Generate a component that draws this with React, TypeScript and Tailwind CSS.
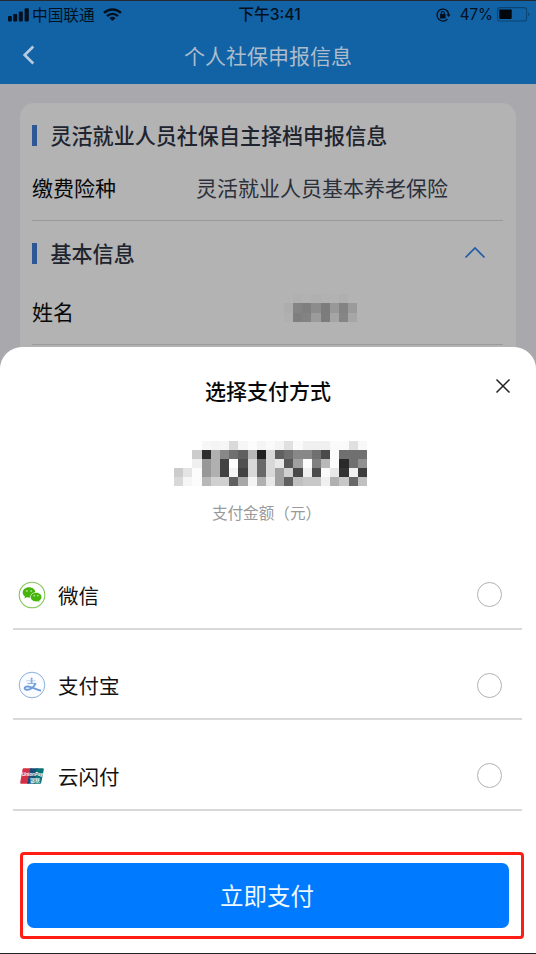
import React from "react";

const AMOUNT_TILES: string[][] = [
  "ff ff ff f7 f4 f6 d9 f6 fc f4 fa f4 e0 fa f0 f0 f0 fa fa e0 f8".split(" "),
  "ff ff cc 2e b0 88 70 60 b8 20 d8 60 70 88 88 70 4a fc 70 70 70".split(" "),
  "ff ff f0 98 b0 42 ff 50 d8 68 d8 e8 58 a0 fc 80 b8 fc 2a 70 90".split(" "),
  "cc e4 fc 98 b0 42 f4 42 d8 68 d8 a0 d0 48 f0 4c fa e8 34 f0 3c".split(" "),
  "d8 f6 fc b8 d0 d0 60 a8 f4 b0 e8 a0 60 c0 c8 c8 f0 b0 c8 68 c0".split(" "),
];

const NAME_TILES: string[][] = [
  "b3 b0 b2 b0 b1 b2 af b3".split(" "),
  "ad 84 7f 8c 7c 98 83 9b".split(" "),
  "b0 7f 83 9b 7c a5 85 a6".split(" "),
];

function Mosaic({ tiles, className }: { tiles: string[][]; className: string }) {
  return (
    <div className={`flex flex-col ${className}`}>
      {tiles.map((row, r) => (
        <div key={r} className="flex flex-1">
          {row.map((v, c) => (
            <div key={c} className="flex-1" style={{ backgroundColor: `#${v}${v}${v}` }} />
          ))}
        </div>
      ))}
    </div>
  );
}

function SignalIcon() {
  return (
    <svg width="22" height="14" viewBox="0 0 22 14" fill="#04101d">
      <rect x="0" y="8" width="3.8" height="5.4" rx="1" />
      <rect x="5.2" y="6" width="4" height="7.4" rx="1" />
      <rect x="10.8" y="3.4" width="4" height="10" rx="1" />
      <rect x="16.6" y="0.3" width="4.2" height="13.1" rx="1" />
    </svg>
  );
}

function WifiIcon() {
  return (
    <svg width="19" height="14" viewBox="0 0 19 14" fill="none" stroke="#04101d">
      <path d="M1 4.9C5.8.3 13.2.3 18 4.9" strokeWidth="2.5" />
      <path d="M4 8.1c3.1-3 7.9-3 11 0" strokeWidth="2.4" />
      <path d="M9.5 13 6.4 10c1.7-1.6 4.5-1.6 6.2 0z" fill="#04101d" stroke="none" />
    </svg>
  );
}

function LockRotationIcon() {
  return (
    <svg width="15" height="14" viewBox="0 0 15 14" fill="none" stroke="#04101d">
      <path d="M12 3.6A6 6 0 1 0 11.4 11.2" strokeWidth="1.3" />
      <path d="M12.6 6.6A6 6 0 0 0 11 2.8" strokeWidth="1.3" />
      <path d="M10.4 6.2h4.2L12.6 9z" fill="#04101d" stroke="none" />
      <rect x="4" y="6" width="5.6" height="4.4" rx=".5" fill="#04101d" stroke="none" />
      <path d="M5.3 6.4V5a1.5 1.5 0 0 1 3 0v1.4" strokeWidth="1.1" />
    </svg>
  );
}

function BatteryIcon() {
  return (
    <svg width="33" height="15" viewBox="0 0 33 15">
      <rect x=".6" y=".6" width="29" height="13.4" rx="2.6" fill="none" stroke="#0b4473" strokeWidth="1.1" />
      <rect x="2.3" y="2.5" width="12.4" height="9.4" rx=".8" fill="#01060c" />
      <path d="M31.2 5.2c1.6.8 1.6 3.4 0 4.2z" fill="#0b4473" />
    </svg>
  );
}

function WechatIcon() {
  return (
    <svg width="28" height="28" viewBox="0 0 28 28">
      <circle cx="14" cy="14" r="12.8" fill="#fff" stroke="#84c75b" strokeWidth="1.1" />
      <path d="M11 6.2c-3.6 0-6.3 2.3-6.3 5.2 0 1.7.9 3.1 2.3 4L6.4 17.5l2.3-1.2c.8.2 1.5.3 2.3.3 3.5 0 6.3-2.2 6.3-5.2s-2.8-5.2-6.3-5.2z" fill="#45b40b" />
      <path d="M18.1 11.4c-3.2 0-5.7 2.1-5.7 4.7s2.5 4.7 5.7 4.7c.7 0 1.3-.1 1.9-.3l1.9 1-.5-1.7c1.5-.9 2.4-2.2 2.4-3.7 0-2.6-2.5-4.7-5.7-4.7z" fill="#45b40b" stroke="#fff" strokeWidth=".6" />
      <g fill="#e9f8df">
        <circle cx="8.9" cy="10" r=".8" />
        <circle cx="13.1" cy="10" r=".8" />
        <circle cx="16.2" cy="14.7" r=".7" />
        <circle cx="19.9" cy="14.7" r=".7" />
      </g>
    </svg>
  );
}

function AlipayIcon() {
  return (
    <svg width="28" height="28" viewBox="0 0 28 28" fill="none">
      <circle cx="14" cy="14" r="12.8" fill="#fafcff" stroke="#8eb0dd" strokeWidth="1" />
      <path d="M8 9.8h9.5" strokeWidth="1" stroke="#c3d5ee" />
      <path d="M13.6 6.6v5.6" strokeWidth="1.7" stroke="#86abdf" />
      <path d="M9.5 12.5h8" strokeWidth="1.2" stroke="#93b4e2" />
      <path d="M17.7 12.2c-1.5 3.1-3.7 5.3-6.3 6.2-2.2.8-4.5.4-4.7-1-.2-1.7 2.6-2.3 5.3-1.6 3.8 1 6.4 2.7 11 3.9" strokeWidth="1.9" stroke="#6e9cd9" strokeLinejoin="round" />
    </svg>
  );
}

function UnionPayIcon() {
  return (
    <svg width="28" height="28" viewBox="0 0 28 28">
      <path d="M5.6 6.3h8.1L10.6 21.7H3.2q-1.2 0-1-1.2L4.6 7.3q.2-1 1-1z" fill="#d52f46" />
      <path d="M12.2 6.3h8L17 21.7H9.3z" fill="#174c78" />
      <path d="M18.6 6.3h6.2q1.2 0 1 1.2l-2.6 13.2q-.2 1-1.2 1h-6.5z" fill="#087477" />
      <text x="3.9" y="13.8" fill="#fff" fontFamily="Liberation Sans, sans-serif" fontSize="4.6" fontStyle="italic" fontWeight="700">UnionPay</text>
      <text x="12" y="19.6" fill="#e4f3f4" fontFamily="Noto Sans CJK SC, sans-serif" fontSize="5" fontWeight="700">银联</text>
    </svg>
  );
}

function SectionTitle({ children }: { children: React.ReactNode }) {
  return (
    <div className="flex items-center">
      <span className="h-[21px] w-[5px] bg-[#2e5796]" />
      <h2 className="ml-[13.5px] text-[21.05px] leading-[30px] font-medium text-[#20242f]">{children}</h2>
    </div>
  );
}

const METHODS = [
  { name: "微信", icon: <WechatIcon /> },
  { name: "支付宝", icon: <AlipayIcon /> },
  { name: "云闪付", icon: <UnionPayIcon /> },
];

export default function App() {
  return (
    <div className="relative flex h-[954px] w-[536px] flex-col overflow-hidden bg-[#a8a8ad] font-['Noto_Sans_CJK_SC',sans-serif]">
      <header className="h-[84px] border-t border-[#242a30] bg-[#1163a6]">
        <div className="grid h-[27px] grid-cols-3 items-center text-[#04101d]">
          <div className="flex items-center pl-2">
            <SignalIcon />
            <span className="ml-[2px] text-[15.7px] leading-6">中国联通</span>
            <span className="ml-[8px]"><WifiIcon /></span>
          </div>
          <div className="pl-[3px] text-center font-['Inter','Noto_Sans_CJK_SC',sans-serif] text-[15.7px] leading-6 font-medium">下午3:41</div>
          <div className="flex items-center justify-end pr-[6px]">
            <LockRotationIcon />
            <span className="mr-[4px] ml-[9px] font-['Inter',sans-serif] text-[15.2px] leading-6">47%</span>
            <BatteryIcon />
          </div>
        </div>
        <div className="grid h-[53px] grid-cols-[60px_1fr_60px] items-center">
          <svg className="ml-[21px]" width="16" height="22" viewBox="0 0 16 22" fill="none" stroke="#b7c9dc" strokeWidth="2.7">
            <path d="M12.3 2.5 3.7 11l8.6 8.5" />
          </svg>
          <h1 className="text-center text-[21px] leading-[30px] text-[#aebccb]">个人社保申报信息</h1>
        </div>
      </header>

      <main className="mx-[20px] mt-[19px] h-[300px] rounded-t-[14px] bg-[#b3b3b3] pt-[17px] pr-[13px] pl-[12px]">
        <SectionTitle>灵活就业人员社保自主择档申报信息</SectionTitle>
        <div className="mt-[15px] flex h-[56px] border-b border-[#999a9b] pt-[7px] text-[21px] leading-[30px]">
          <span className="w-[164px] text-[#080808]">缴费险种</span>
          <span className="text-[#2b303b]">灵活就业人员基本养老保险</span>
        </div>
        <div className="flex items-center justify-between pt-[17px] pr-[17px]">
          <SectionTitle>基本信息</SectionTitle>
          <svg width="22" height="14" viewBox="0 0 22 14" fill="none" stroke="#215da4" strokeWidth="1.7">
            <path d="M1.5 11.5 11 2l9.5 9.5" />
          </svg>
        </div>
        <div className="flex h-[77px] border-b border-[#999a9b] pt-[28px] text-[21px] leading-[30px] text-[#080808]">
          <span className="w-[252px]">姓名</span>
          <Mosaic tiles={NAME_TILES} className="mt-[-2px] h-[28px] w-[73px]" />
        </div>
      </main>

      <section className="absolute inset-x-0 bottom-0 flex h-[607px] flex-col rounded-t-[22px] border-b border-[#242424] bg-white">
        <div className="grid grid-cols-[60px_1fr_60px] pt-[28px]">
          <h2 className="col-start-2 text-center text-[21px] leading-[30px] font-medium text-[#080808]">选择支付方式</h2>
          <svg className="mt-[3px] ml-[19px]" width="16" height="16" viewBox="0 0 16 16" fill="none" stroke="#222" strokeWidth="1.5">
            <path d="m1.5 1.5 13 13M14.5 1.5l-13 13" />
          </svg>
        </div>
        <Mosaic tiles={AMOUNT_TILES} className="mt-[36px] ml-[174px] h-[45px] w-[193px]" />
        <p className="mt-[14px] pr-[3px] text-center text-[15.6px] leading-6 text-[#999]">支付金额（元）</p>

        <ul className="mt-[15px] mr-[14px] ml-[13px]">
          {METHODS.map((m) => (
            <li key={m.name} className="flex h-[90.5px] items-end border-b-2 border-[#d9d9d9] pb-[18px]">
              <div className="flex w-full items-center pl-[5px]">
                {m.icon}
                <span className="ml-[12px] text-[20.5px] leading-[30px] text-[#111]">{m.name}</span>
                <span className="mr-[20px] ml-auto size-[25px] rounded-full border-[1.5px] border-[#b2b2b2]" />
              </div>
            </li>
          ))}
        </ul>

        <div className="mt-[41px] mr-[12px] ml-[20px] h-[87px] rounded-[4px] border-[3px] border-[#ff1d14] pt-[8px] pr-[12px] pl-[4px]">
          <button className="block h-[65px] w-full rounded-[7px] bg-[#007aff] pr-[2px] text-[23.5px] leading-[64px] text-[#eef8ff]">立即支付</button>
        </div>
      </section>
    </div>
  );
}
